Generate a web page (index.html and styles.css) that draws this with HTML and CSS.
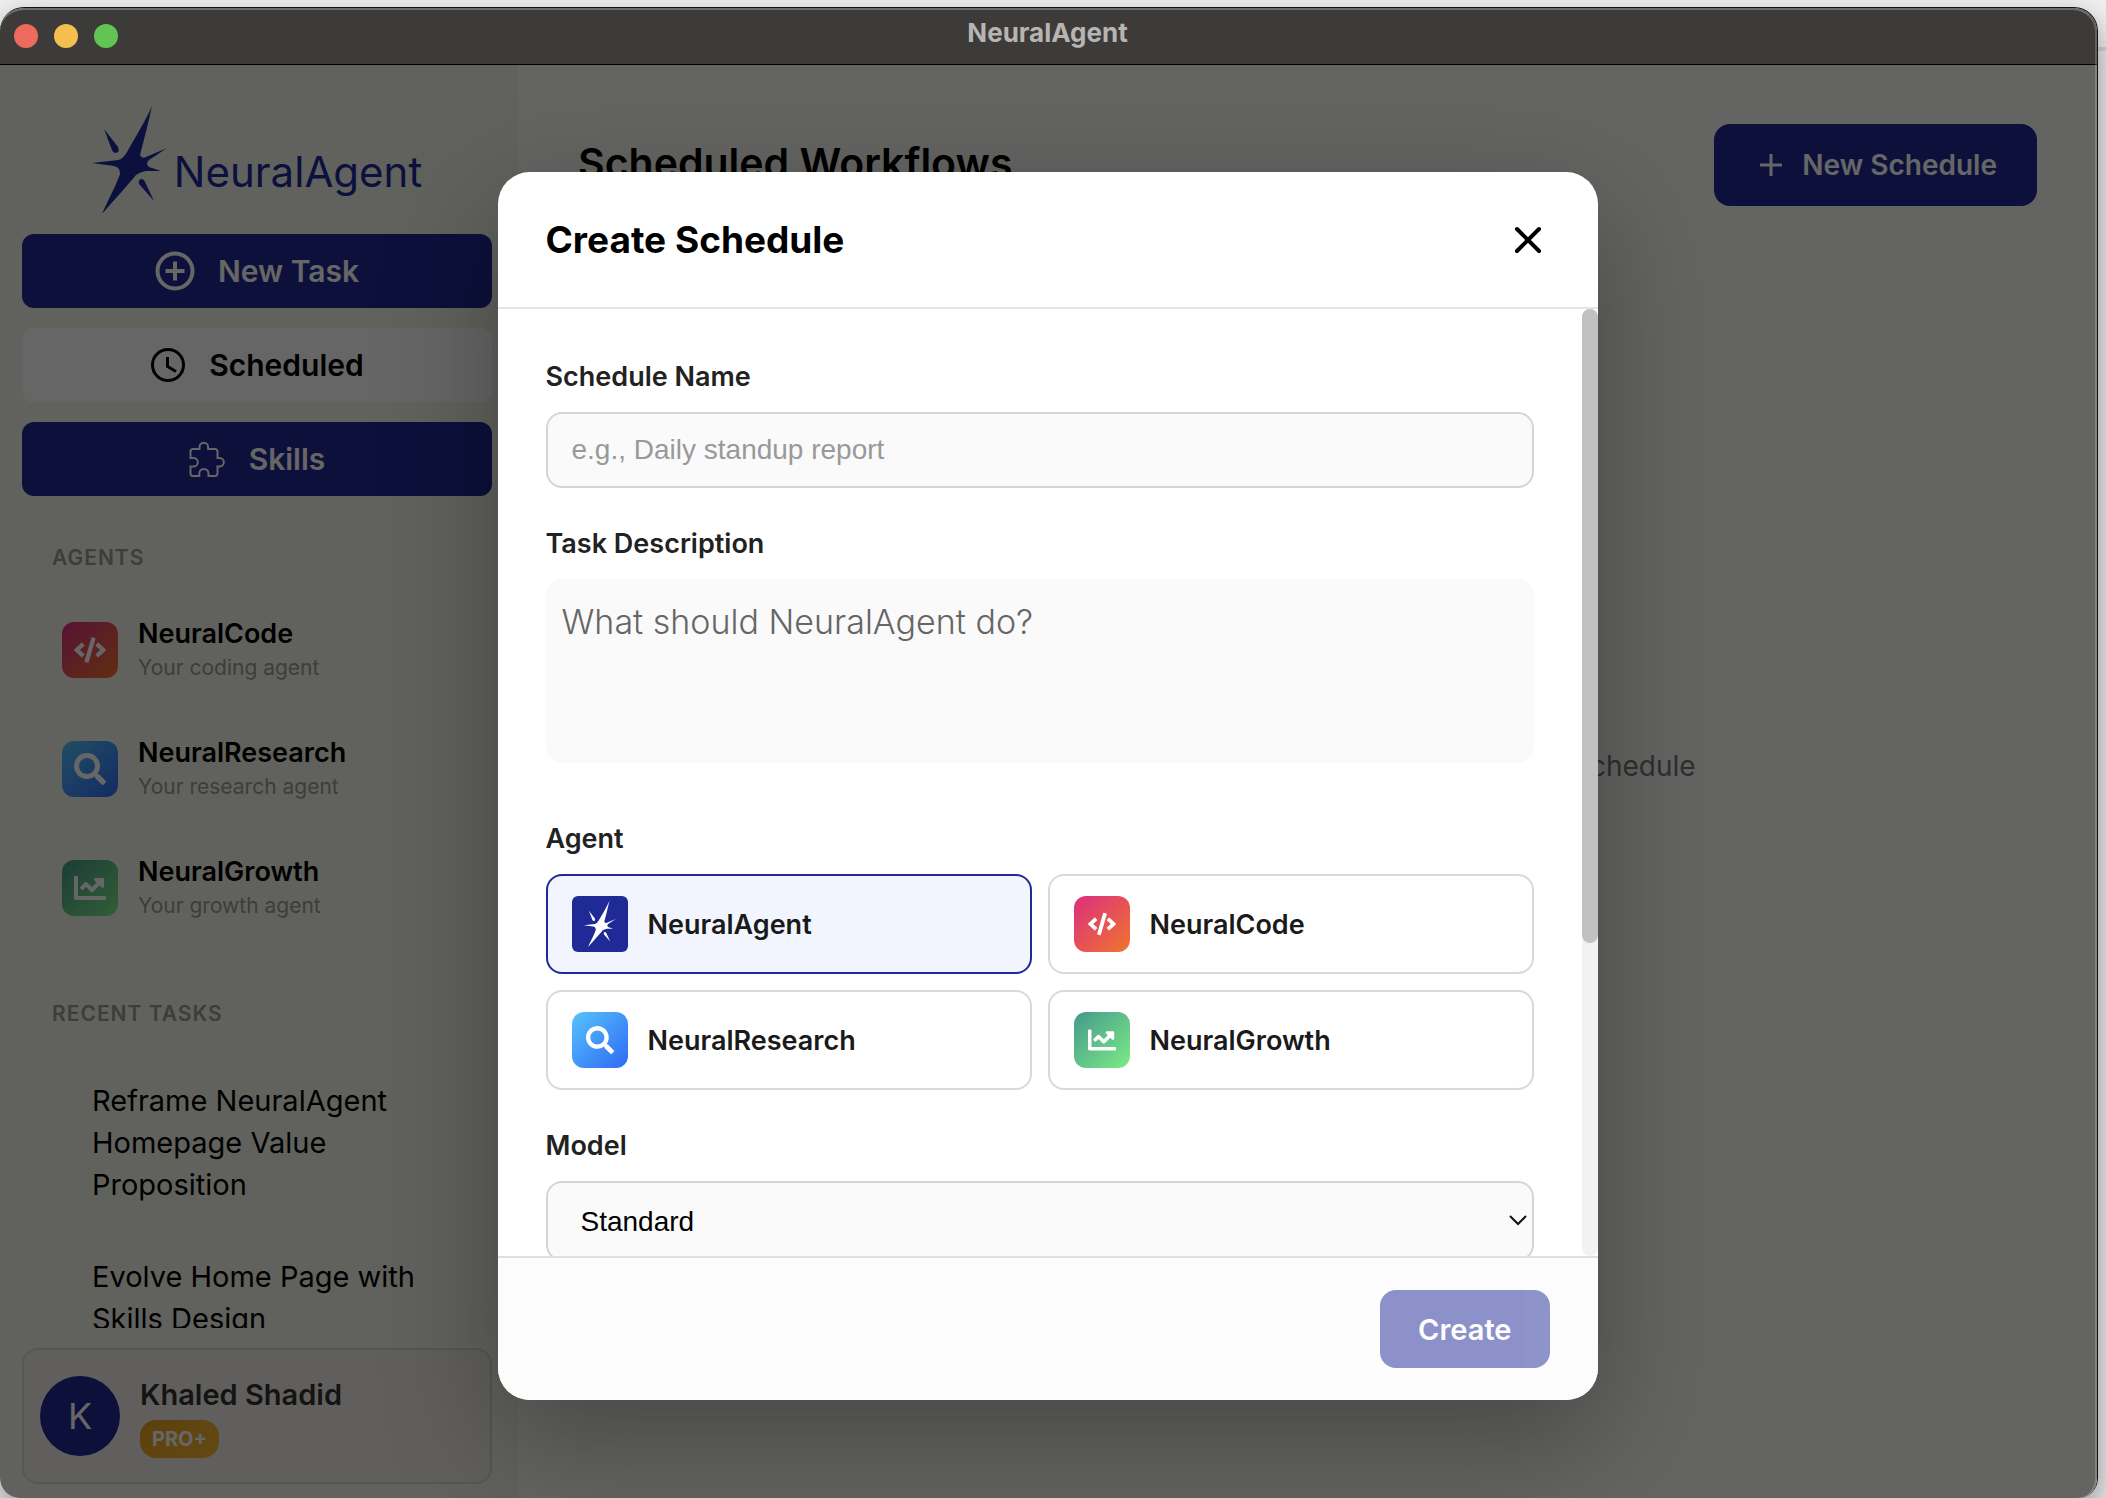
FILE: index.html
```html
<!DOCTYPE html>
<html lang="en">
<head>
    <meta charset="UTF-8">
    <meta name="viewport" content="width=device-width, initial-scale=1.0">
    <title>NeuralAgent</title>
    <link rel="stylesheet" href="styles.css">
</head>
<body>
    <svg class="sprite" aria-hidden="true">
        <symbol id="star" viewBox="0 0 76 108">
            <path d="M60 0C56 18 52 34 48 49Q50 53 54 51L75 42L57 54Q53 58 57 61L69 65L54 65Q48 66 44 69C35 80 22 94 10 108C16 94 24 80 28 68Q28 61 22 60L0 57L26 54Q31 53 35 46C44 30 54 14 60 0Z"/>
            <path d="M12 23L26 41Q28 46 24 47Q21 47 20 44Z"/>
            <path d="M47 78Q46 74 49 73Q52 73 53 76L62 95Z"/>
        </symbol>
        <symbol id="code" viewBox="0 0 640 512">
            <path d="M278.9 511.5l-61-17.7c-6.4-1.8-10-8.5-8.2-14.9L346.2 8.7c1.8-6.4 8.5-10 14.9-8.2l61 17.7c6.4 1.8 10 8.5 8.2 14.9L293.8 503.3c-1.9 6.4-8.5 10.1-14.9 8.2zm-114-112.2l43.5-46.4c4.6-4.9 4.3-12.7-.8-17.2L117 256l90.6-79.7c5.1-4.5 5.5-12.3.8-17.2l-43.5-46.4c-4.5-4.8-12.1-5.1-17-.5L3.8 247.2c-5.1 4.7-5.1 12.8 0 17.5l144.1 135.1c4.9 4.6 12.5 4.4 17-.5zm327.2.6l144.1-135.1c5.1-4.7 5.1-12.8 0-17.5L492.1 112.1c-4.8-4.5-12.4-4.3-17 .5L431.6 159c-4.6 4.9-4.3 12.7.8 17.2L523 256l-90.6 79.7c-5.1 4.5-5.5 12.3-.8 17.2l43.5 46.4c4.5 4.9 12.1 5.1 17 .6z"/>
        </symbol>
        <symbol id="search" viewBox="0 0 512 512">
            <path d="M505 442.7L405.3 343c-4.5-4.5-10.6-7-17-7H372c27.6-35.3 44-79.7 44-128C416 93.1 322.9 0 208 0S0 93.1 0 208s93.1 208 208 208c48.3 0 92.7-16.4 128-44v16.3c0 6.4 2.5 12.5 7 17l99.7 99.7c9.4 9.4 24.6 9.4 33.9 0l28.3-28.3c9.4-9.4 9.4-24.6.1-34zM208 336c-70.7 0-128-57.2-128-128 0-70.7 57.2-128 128-128 70.7 0 128 57.2 128 128 0 70.7-57.2 128-128 128z"/>
        </symbol>
        <symbol id="chart" viewBox="0 0 512 512">
            <path d="M496 384H64V80c0-8.84-7.16-16-16-16H16C7.16 64 0 71.16 0 80v336c0 17.67 14.33 32 32 32h464c8.84 0 16-7.16 16-16v-32c0-8.84-7.16-16-16-16zM464 96H345.94c-21.38 0-32.09 25.85-16.97 40.97l32.4 32.4L288 242.75l-73.37-73.37c-12.5-12.5-32.76-12.5-45.25 0l-68.69 68.69c-6.25 6.25-6.25 16.38 0 22.63l22.62 22.62c6.25 6.25 16.38 6.25 22.63 0L192 237.25l73.37 73.37c12.5 12.5 32.76 12.5 45.25 0l96-96 32.4 32.4c15.12 15.12 40.97 4.41 40.97-16.97V112c.01-8.84-7.15-16-15.99-16z"/>
        </symbol>
    </svg>

    <div class="window">
        <div class="titlebar">
            <div class="lights">
                <span class="light red"></span>
                <span class="light yellow"></span>
                <span class="light green"></span>
            </div>
            <div class="window-title">NeuralAgent</div>
        </div>

        <div class="app">
            <aside class="sidebar">
                <div class="logo">
                    <svg class="logo-star"><use href="#star"/></svg>
                    <span class="logo-text">NeuralAgent</span>
                </div>
                <nav class="nav">
                    <button type="button" class="nav-btn">
                        <svg class="nav-icon" viewBox="0 0 40 40" width="40" height="40"><circle cx="20" cy="20" r="17.5"/><path d="M20 10.5v19M10.5 20h19"/></svg>
                        New Task
                    </button>
                    <button type="button" class="nav-btn active">
                        <svg class="nav-icon clock" viewBox="0 0 36 36" width="36" height="36"><circle cx="18" cy="18" r="15.5"/><path d="M17.5 10v9.5l8.500 5"/></svg>
                        Scheduled
                    </button>
                    <button type="button" class="nav-btn">
                        <svg class="nav-icon puzzle" viewBox="0 0 37 37" width="37" height="37"><path d="M4 8H10.5V6a4.3 4.3 0 0 1 8.6 0V8H26a2.5 2.5 0 0 1 2.5 2.5V17h2a4.3 4.3 0 0 1 0 8.6h-2V32.5a2.5 2.5 0 0 1-2.5 2.5H19.5v-2.5a4.6 4.6 0 0 0-9.2 0V35H4a2.5 2.5 0 0 1-2.5-2.5V25.6H4.5a4.3 4.3 0 0 0 0-8.6H1.5V10.5A2.5 2.5 0 0 1 4 8z"/></svg>
                        Skills
                    </button>
                </nav>

                <div class="side-scroll">
                    <h2 class="side-label">AGENTS</h2>
                    <div class="agents">
                        <a href="#" class="agent">
                            <span class="tile code"><svg><use href="#code"/></svg></span>
                            <span class="agent-text"><span class="agent-name">NeuralCode</span><span class="agent-sub">Your coding agent</span></span>
                        </a>
                        <a href="#" class="agent">
                            <span class="tile research"><svg><use href="#search"/></svg></span>
                            <span class="agent-text"><span class="agent-name">NeuralResearch</span><span class="agent-sub">Your research agent</span></span>
                        </a>
                        <a href="#" class="agent">
                            <span class="tile growth"><svg><use href="#chart"/></svg></span>
                            <span class="agent-text"><span class="agent-name">NeuralGrowth</span><span class="agent-sub">Your growth agent</span></span>
                        </a>
                    </div>
                    <h2 class="side-label recent">RECENT TASKS</h2>
                    <div class="tasks">
                        <a href="#" class="task">Reframe NeuralAgent Homepage Value Proposition</a>
                        <a href="#" class="task">Evolve Home Page with Skills Design</a>
                    </div>
                </div>

                <div class="user">
                    <div class="avatar">K</div>
                    <div class="user-info">
                        <div class="user-name">Khaled Shadid</div>
                        <span class="badge">PRO+</span>
                    </div>
                </div>
            </aside>

            <main class="main">
                <div class="main-header">
                    <h1>Scheduled Workflows</h1>
                    <button type="button" class="new-btn">
                        <svg viewBox="0 0 22 22" width="22" height="22"><path d="M11 0v22M0 11h22"/></svg>
                        New Schedule
                    </button>
                </div>
                <p class="empty">No workflows yet. Click New Schedule to make a schedule</p>
            </main>

            <div class="overlay">
                <div class="modal" role="dialog" aria-labelledby="modal-title">
                    <div class="modal-header">
                        <h2 id="modal-title">Create Schedule</h2>
                        <button type="button" class="close" aria-label="Close">
                            <svg viewBox="0 0 28 28" width="28" height="28"><path d="M3 3l22 22M25 3L3 25"/></svg>
                        </button>
                    </div>
                    <div class="modal-body">
                        <form class="form" id="schedule-form">
                            <div class="field">
                                <label for="name">Schedule Name</label>
                                <input type="text" id="name" placeholder="e.g., Daily standup report">
                            </div>
                            <div class="field">
                                <label for="description">Task Description</label>
                                <textarea id="description" placeholder="What should NeuralAgent do?"></textarea>
                            </div>
                            <div class="field">
                                <div class="field-title" id="agent-label">Agent</div>
                                <div class="choices" role="group" aria-labelledby="agent-label">
                                    <button type="button" class="choice selected"><span class="tile neural"><svg><use href="#star"/></svg></span>NeuralAgent</button>
                                    <button type="button" class="choice"><span class="tile code"><svg><use href="#code"/></svg></span>NeuralCode</button>
                                    <button type="button" class="choice"><span class="tile research"><svg><use href="#search"/></svg></span>NeuralResearch</button>
                                    <button type="button" class="choice"><span class="tile growth"><svg><use href="#chart"/></svg></span>NeuralGrowth</button>
                                </div>
                            </div>
                            <div class="field">
                                <label for="model">Model</label>
                                <div class="select-wrap">
                                    <select id="model"><option>Standard</option></select>
                                    <svg viewBox="0 0 18 12" width="18" height="12"><path d="M1 1l8 8 8-8"/></svg>
                                </div>
                            </div>
                        </form>
                        <div class="scrollbar"><div class="thumb"></div></div>
                    </div>
                    <div class="modal-footer">
                        <button type="submit" form="schedule-form" class="create-btn" disabled>Create</button>
                    </div>
                </div>
            </div>
        </div>
    </div>
</body>
</html>
```

FILE: styles.css
```css
* {
    box-sizing: border-box;
}
body {
    margin: 0;
    height: 100vh;
    padding: 7px 8px 0 0;
    overflow: hidden;
    background: linear-gradient(#f0f0f1 47px, #d6d6da 47px, #d6d6da 51px, #ececee 51px);
    font-family: Inter, "Liberation Sans", sans-serif;
    color: #000;
}
h1, h2, p {
    margin: 0;
}
a {
    color: inherit;
    text-decoration: none;
}
button {
    font-family: inherit;
    border: none;
    cursor: pointer;
}
.sprite {
    display: none;
}

/* window frame */
.window {
    position: relative;
    height: 100%;
    display: flex;
    flex-direction: column;
    border-top: 1px solid #111;
    border-right: 1px solid #111;
    border-radius: 24px 24px 20px 20px;
    overflow: hidden;
    box-shadow: 0 12px 30px rgba(0, 0, 0, 0.4);
}
.window::after {
    content: "";
    position: absolute;
    inset: 0;
    border-top: 2px solid rgba(255, 255, 255, 0.25);
    border-right: 2px solid rgba(255, 255, 255, 0.2);
    border-radius: 24px 24px 20px 20px;
    pointer-events: none;
}
.titlebar {
    flex: none;
    height: 57px;
    display: grid;
    grid-template-columns: 1fr auto 1fr;
    align-items: center;
    padding: 0 16px 0 14px;
    background: #3d3b39;
    border-bottom: 1px solid #000;
}
.lights {
    display: flex;
    gap: 16px;
}
.light {
    width: 24px;
    height: 24px;
    border-radius: 50%;
}
.red {
    background: #ed6a5e;
}
.yellow {
    background: #f5bf4f;
}
.green {
    background: #61c554;
}
.window-title {
    font-size: 26px;
    font-weight: 700;
    line-height: 32px;
    padding-bottom: 6px;
    color: #b6b5b3;
}
.app {
    flex: 1;
    min-height: 0;
    display: flex;
    position: relative;
    background: #fafaf4;
}

/* sidebar */
.sidebar {
    flex: none;
    width: 518px;
    display: flex;
    flex-direction: column;
    padding: 41px 26px 14px 22px;
    background: #f3f5e8;
}
.logo {
    display: flex;
    justify-content: center;
    align-items: flex-end;
    gap: 6px;
    margin-bottom: 20px;
    color: #1f2a9b;
}
.logo-star {
    width: 76px;
    height: 108px;
    fill: currentColor;
}
.logo-text {
    font-size: 42px;
    font-weight: 400;
    line-height: 84px;
}
.nav {
    display: flex;
    flex-direction: column;
    gap: 20px;
}
.nav-btn {
    height: 74px;
    display: flex;
    align-items: center;
    justify-content: center;
    gap: 23px;
    border-radius: 12px;
    background: #1f2a93;
    color: #fff;
    font-size: 30px;
    font-weight: 600;
}
.nav-btn.active {
    background: #fff;
    color: #000;
}
.nav-icon {
    fill: none;
    stroke: currentColor;
    stroke-width: 4;
}
.nav-icon.clock {
    stroke-width: 3;
}
.nav-icon.puzzle {
    stroke-width: 2;
}
.side-scroll {
    flex: 1;
    min-height: 0;
    overflow: hidden;
    padding-top: 46px;
    margin-bottom: 20px;
}
.side-label {
    padding-left: 30px;
    font-size: 21px;
    font-weight: 600;
    line-height: 32px;
    letter-spacing: 1px;
    color: #999;
}
.side-label.recent {
    margin-top: 51px;
}
.agents {
    margin-top: 16px;
}
.agent {
    height: 119px;
    display: flex;
    align-items: center;
    gap: 20px;
    padding-left: 40px;
}
.tile {
    flex: none;
    width: 56px;
    height: 56px;
    display: flex;
    align-items: center;
    justify-content: center;
    border-radius: 12px;
}
.tile svg {
    width: 32px;
    height: 32px;
    fill: #fff;
}
.tile.code {
    background: linear-gradient(135deg, #dd2e7f, #ef752c);
}
.tile.research {
    background: linear-gradient(135deg, #56c2fb, #2f6af5);
}
.tile.growth {
    background: linear-gradient(135deg, #45988c, #7bec87);
}
.tile.neural {
    border-radius: 6px;
    background: #1f2a97;
}
.agent-text {
    display: flex;
    flex-direction: column;
}
.agent-name {
    font-size: 27px;
    font-weight: 600;
    line-height: 36px;
}
.agent-sub {
    font-size: 21px;
    line-height: 32px;
    color: #999;
}
.tasks {
    margin-top: 25px;
}
.task {
    display: block;
    padding: 25px 60px 25px 70px;
    font-size: 29px;
    line-height: 42px;
}
.user {
    flex: none;
    height: 136px;
    display: flex;
    align-items: center;
    gap: 20px;
    padding: 0 16px;
    border: 2px solid #d8d8d4;
    border-radius: 16px;
    background: #f0eeea;
}
.avatar {
    width: 80px;
    height: 80px;
    display: flex;
    align-items: center;
    justify-content: center;
    border-radius: 50%;
    background: #1f2a93;
    color: #fff;
    font-size: 36px;
}
.user-name {
    font-size: 29px;
    font-weight: 600;
    line-height: 42px;
    margin-bottom: 4px;
    color: #333;
}
.badge {
    display: inline-flex;
    align-items: center;
    height: 38px;
    padding: 0 12px;
    border-radius: 16px;
    background: linear-gradient(135deg, #e8a01f, #f5b935);
    color: #fff;
    font-size: 20px;
    font-weight: 700;
}

/* page behind the dialog */
.main {
    flex: 1;
    display: flex;
    flex-direction: column;
    padding: 59px 60px 0;
}
.main-header {
    display: flex;
    align-items: center;
    justify-content: space-between;
}
.main-header h1 {
    padding-bottom: 4px;
    font-size: 41px;
    font-weight: 600;
}
.new-btn {
    height: 82px;
    display: flex;
    align-items: center;
    gap: 20px;
    padding: 0 40px 0 46px;
    border-radius: 16px;
    background: #1f2a93;
    color: #fff;
    font-size: 28px;
    font-weight: 600;
}
.new-btn svg {
    stroke: currentColor;
    stroke-width: 3;
}
.empty {
    margin: auto;
    padding-bottom: 172px;
    font-size: 28px;
    color: #777;
}

/* dialog */
.overlay {
    position: absolute;
    inset: 0;
    display: flex;
    justify-content: center;
    padding: 107px 22px 98px 20px;
    background: rgba(0, 0, 0, 0.6);
}
.modal {
    width: 1100px;
    display: flex;
    flex-direction: column;
    overflow: hidden;
    border-radius: 32px;
    background: #fff;
    box-shadow: 0 40px 120px rgba(0, 0, 0, 0.3);
}
.modal-header {
    flex: none;
    height: 137px;
    display: flex;
    align-items: center;
    justify-content: space-between;
    padding: 0 48px;
    border-bottom: 2px solid #e5e5e5;
}
.modal-header h2 {
    font-size: 37px;
    font-weight: 700;
}
.close {
    width: 44px;
    height: 44px;
    display: flex;
    align-items: center;
    justify-content: center;
    padding: 0;
    background: none;
}
.close svg {
    stroke: #000;
    stroke-width: 4;
    stroke-linecap: round;
}
.modal-body {
    flex: 1;
    min-height: 0;
    display: flex;
}
.form {
    flex: 1;
    overflow: hidden;
    display: flex;
    flex-direction: column;
    gap: 36px;
    padding: 48px;
}
.field {
    display: flex;
    flex-direction: column;
    gap: 16px;
}
label, .field-title {
    font-size: 27px;
    font-weight: 600;
    line-height: 39px;
    color: #222;
}
input, select {
    width: 100%;
    height: 76px;
    padding: 0 24px;
    border: 2px solid #d5d5d5;
    border-radius: 16px;
    background: #fafafa;
    font-family: "Liberation Sans", Arial, sans-serif;
    font-size: 28px;
}
input::placeholder {
    color: #999;
}
textarea {
    width: 100%;
    height: 184px;
    margin-bottom: 20px;
    padding: 20px 16px;
    border: none;
    border-radius: 16px;
    background: #fafafa;
    font-family: inherit;
    font-size: 34px;
    font-weight: 300;
    line-height: 46px;
    resize: none;
}
textarea::placeholder {
    color: #666;
}
.choices {
    display: grid;
    grid-template-columns: 1fr 1fr;
    gap: 16px;
}
.choice {
    height: 100px;
    display: flex;
    align-items: center;
    gap: 20px;
    padding: 0 24px;
    border: 2px solid #d9d9d9;
    border-radius: 16px;
    background: #fff;
    color: #1a1a1a;
    font-size: 27px;
    font-weight: 600;
}
.choice.selected {
    border-color: #1f2a97;
    background: #f2f5fd;
}
.choice .tile svg {
    width: 28px;
    height: 28px;
}
.choice .neural svg {
    width: 34px;
    height: 46px;
}
.select-wrap {
    display: grid;
    align-items: center;
}
.select-wrap select,
.select-wrap svg {
    grid-area: 1 / 1;
}
.select-wrap select {
    height: 80px;
    padding: 0 33px;
    appearance: none;
    color: #000;
}
.select-wrap svg {
    justify-self: end;
    margin-right: 7px;
    fill: none;
    stroke: #111;
    stroke-width: 2;
    pointer-events: none;
}
.scrollbar {
    flex: none;
    width: 16px;
    border-radius: 8px;
    background: #f2f2f2;
}
.thumb {
    height: 67%;
    border-radius: 8px;
    background: #c1c1c1;
}
.modal-footer {
    flex: none;
    display: flex;
    justify-content: flex-end;
    padding: 32px 48px;
    border-top: 2px solid #e0e0e0;
    background: #fcfcfc;
}
.create-btn {
    height: 78px;
    padding: 0 38px;
    border-radius: 16px;
    background: #1f2a97;
    color: #fff;
    font-size: 29px;
    font-weight: 600;
    opacity: 0.5;
}
```
